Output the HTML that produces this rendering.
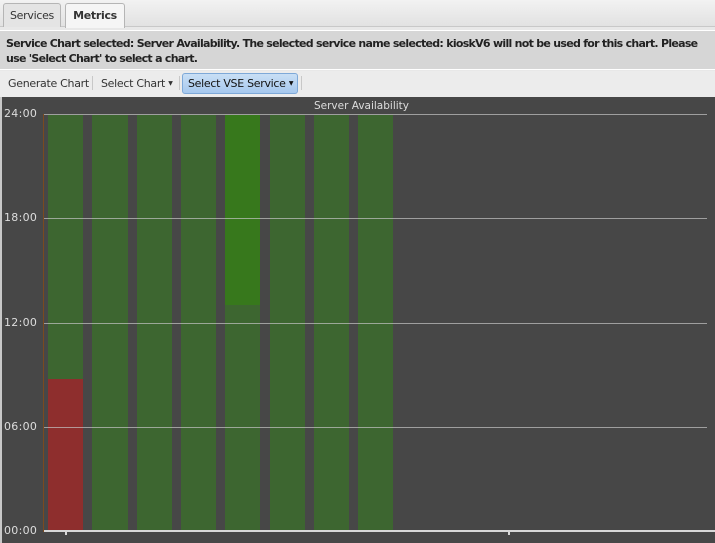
<!DOCTYPE html>
<html><head><style>
*{margin:0;padding:0;box-sizing:border-box}
body{width:715px;height:543px;position:relative;background:#e8e8e8;font-family:"DejaVu Sans","Liberation Sans",sans-serif;overflow:hidden}
.abs{position:absolute}
.tab{position:absolute;top:3px;height:24px;border:1px solid #b5b5b5;border-bottom:none;border-radius:3px 3px 0 0;font-size:11px;padding-top:5px;text-align:center;color:#333}
.grid{position:absolute;left:44px;width:663px;height:1px;background:#c4c4c4}
.bar{position:absolute;top:115px;height:416px;background:#3d6630;width:35px}
.lbl{position:absolute;left:4px;font-size:11px;color:#ddd;letter-spacing:0.3px}
.tb{position:absolute;top:6px;font-size:11px;letter-spacing:-0.3px;white-space:nowrap}
</style></head><body>
<div class="abs" style="left:0;top:0;width:715px;height:27px;background:linear-gradient(#f2f2f2,#e2e2e2);border-bottom:1px solid #c8c8c8"></div>
<div class="tab" style="left:3px;width:58px;background:#e4e4e4;font-size:11px;letter-spacing:-0.3px">Services</div>
<div class="tab" style="left:65px;width:60px;background:#f5f5f5;font-weight:bold;font-size:11px;letter-spacing:-0.3px;height:25px">Metrics</div>
<div class="abs" style="left:0;top:30px;width:715px;height:40px;background:#d6d6d6;border-top:1px solid #fff;border-bottom:1px solid #fff;font-size:11px;font-weight:bold;color:#222;padding:5px 0 0 6px;line-height:15px;letter-spacing:-0.72px;white-space:nowrap;overflow:hidden">Service Chart selected: Server Availability. The selected service name selected: kioskV6 will not be used for this chart. Please<br>use 'Select Chart' to select a chart.</div>
<div class="abs" style="left:0;top:71px;width:715px;height:26px;background:#ececec;color:#333">
<span class="tb" style="left:8px">Generate Chart</span>
<span class="abs" style="left:92px;top:5px;width:1px;height:14px;background:#c8c8c8"></span>
<span class="tb" style="left:101px">Select Chart <span style="font-size:6px;vertical-align:2px">▼</span></span>
<span class="abs" style="left:179px;top:5px;width:1px;height:14px;background:#c8c8c8"></span>
<span class="abs" style="left:182px;top:2px;width:116px;height:21px;border:1px solid #7ea9d8;border-radius:3px;background:linear-gradient(#c9dff5,#a6c8ee);color:#111"><span class="tb" style="left:5px;top:3px">Select VSE Service <span style="font-size:6px;vertical-align:2px">▼</span></span></span>
<span class="abs" style="left:301px;top:5px;width:1px;height:14px;background:#c8c8c8"></span>
</div>
<div class="abs" style="left:0;top:97px;width:715px;height:446px;background:#474747;border-left:2px solid #c8c8c8"></div>
<div class="abs" style="left:0;top:100px;width:715px;text-align:center;font-size:10.5px;color:#ddd;padding-left:8px">Server Availability</div>
<div class="bar" style="left:48px"></div>
<div class="abs" style="left:48px;top:379px;width:35px;height:152px;background:#8e2e2d"></div>
<div class="bar" style="left:92px;width:36px"></div>
<div class="bar" style="left:137px"></div>
<div class="bar" style="left:181px"></div>
<div class="bar" style="left:225px"></div>
<div class="abs" style="left:225px;top:115px;width:35px;height:190px;background:#37781c"></div>
<div class="bar" style="left:270px"></div>
<div class="bar" style="left:314px"></div>
<div class="bar" style="left:358px"></div>
<div class="grid" style="top:114px;opacity:.7"></div>
<div class="grid" style="top:218px;opacity:.7"></div>
<div class="grid" style="top:323px;opacity:.7"></div>
<div class="grid" style="top:427px;opacity:.7"></div>
<div class="abs" style="left:43px;top:114px;width:1px;height:418px;background:#7a4a20"></div>
<div class="abs" style="left:44px;top:530px;width:671px;height:2px;background:#d8d8d8"></div>
<div class="abs" style="left:65px;top:532px;width:2px;height:3px;background:#d8d8d8"></div>
<div class="abs" style="left:508px;top:532px;width:2px;height:3px;background:#d8d8d8"></div>
<div class="lbl" style="top:107px">24:00</div>
<div class="lbl" style="top:211px">18:00</div>
<div class="lbl" style="top:316px">12:00</div>
<div class="lbl" style="top:420px">06:00</div>
<div class="lbl" style="top:524px">00:00</div>
</body></html>
